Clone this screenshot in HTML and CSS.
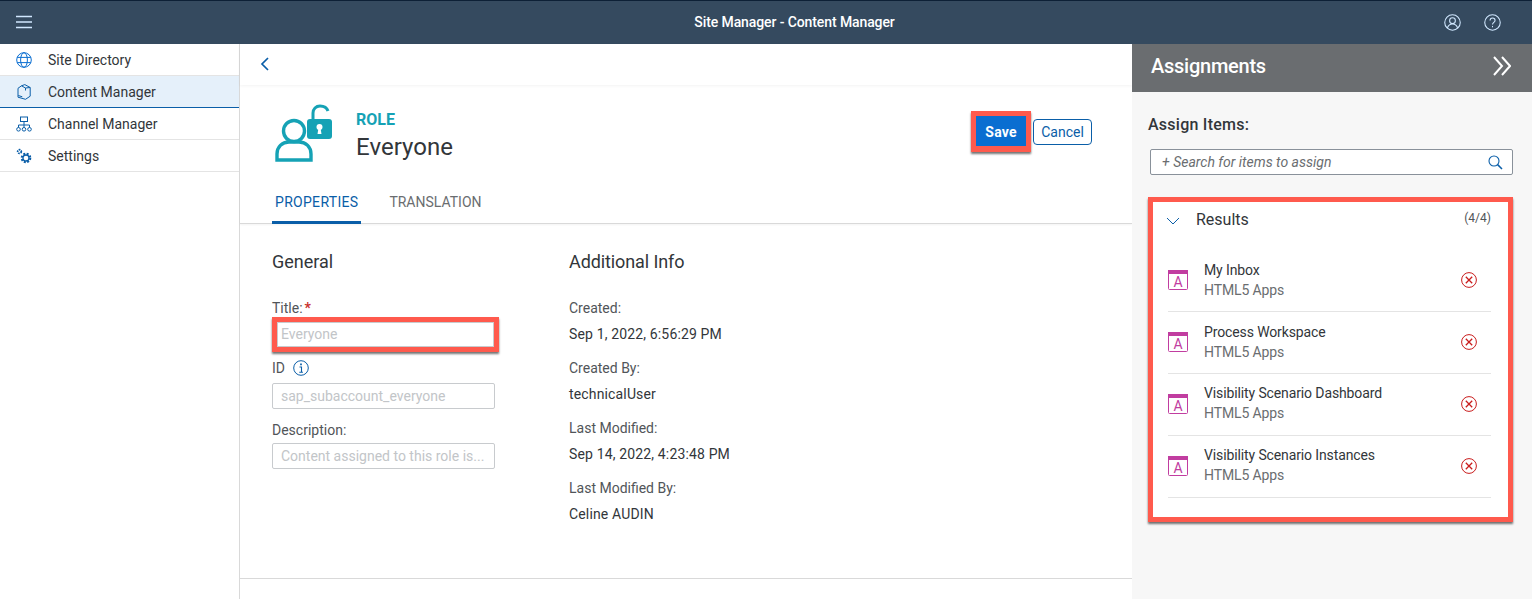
FILE: index.html
```html
<!DOCTYPE html>
<html lang="en">
<head>
    <meta charset="UTF-8">
    <title>Site Manager - Content Manager</title>
    <link rel="stylesheet" href="styles.css">
</head>
<body>
    <header class="shell">
        <svg class="shell-menu" width="16" height="14" viewBox="0 0 16 14"><path d="M0 1.500h16M0 7h16M0 12.500h16" stroke="#d1e8ff" stroke-width="1.400"/></svg>
        <div class="shell-title">Site Manager - Content Manager</div>
        <svg class="shell-icon" width="17" height="17" viewBox="0 0 16 16" fill="none" stroke="#d1e8ff" stroke-width="1"><circle cx="8" cy="8" r="7.300"/><circle cx="8" cy="6.300" r="2.700"/><path d="M3.200 13.400c.6-2.600 2.500-4 4.800-4s4.200 1.400 4.800 4"/></svg>
        <svg class="shell-icon" width="17" height="17" viewBox="0 0 16 16" fill="none" stroke="#d1e8ff" stroke-width="1"><circle cx="8" cy="8" r="7.300"/><path d="M5.700 6.200c0-1.400 1.100-2.400 2.400-2.400s2.300 1 2.300 2.200c0 1.900-2.400 1.900-2.400 3.900"/><path d="M8 11.200v1.300"/></svg>
    </header>
    <div class="layout">
        <nav class="sidebar">
            <div class="nav-item">
                <svg width="16" height="16" viewBox="0 0 16 16" fill="none" stroke="#0a6ed1" stroke-width="1"><circle cx="8" cy="8" r="7.300"/><ellipse cx="8" cy="8" rx="3.400" ry="7.300"/><path d="M1.200 5.400h13.600M1.200 10.600h13.600"/></svg>
                <span>Site Directory</span>
            </div>
            <div class="nav-item active">
                <svg width="16" height="16" viewBox="0 0 16 16" fill="none" stroke="#0a5ea8" stroke-width="1"><path d="M5.500 1.800L8.800.6l5.400 2.900v8.700L9.500 15.300 2 13.200V4.300zM5.500 1.800l4 2.200 4.700-.5M9.500 4v2.500M2.300 11.500l4 1.300"/></svg>
                <span>Content Manager</span>
            </div>
            <div class="nav-item">
                <svg width="16" height="16" viewBox="0 0 16 16" fill="none" stroke="#0a5ea8" stroke-width="1"><rect x="4.500" y="1" width="7" height="4.500"/><path d="M8 5.500v3.500M2.500 11.500V9h11v2.500M8 9v2.500"/><circle cx="2.500" cy="13.300" r="1.800"/><circle cx="8" cy="13.300" r="1.800"/><circle cx="13.500" cy="13.300" r="1.800"/></svg>
                <span>Channel Manager</span>
            </div>
            <div class="nav-item">
                <svg width="16" height="16" viewBox="0 0 16 16" fill="none" stroke="#0a5ea8"><circle cx="3.500" cy="3.500" r="1.800" stroke-dasharray="1.500 .8" stroke-width="1.800"/><circle cx="10" cy="10" r="3" stroke-width="1.300"/><circle cx="10" cy="10" r="4.300" stroke-dasharray="2 1.400" stroke-width="2"/></svg>
                <span>Settings</span>
            </div>
        </nav>

        <main class="content">
            <div class="back-bar">
                <svg width="9" height="14" viewBox="0 0 9 14" fill="none" stroke="#0a5ea8" stroke-width="1.700"><path d="M8 1L2 7l6 6"/></svg>
            </div>
            <div class="object-header">
                <svg class="role-icon" width="60" height="58" viewBox="0 0 60 58" fill="none">
                    <circle cx="19" cy="27" r="10.500" stroke="#15a2b5" stroke-width="3.400"/>
                    <path d="M2 56V50c0-7 5-12 12-12h10c7 0 12 5 12 12v6H2z" stroke="#15a2b5" stroke-width="3.400"/>
                    <path d="M38 16V9c0-4 3-7 7-7s7 2 8 5" stroke="#15a2b5" stroke-width="3"/>
                    <rect x="32" y="15" width="25" height="20" rx="3" fill="#15a2b5"/>
                    <circle cx="44.500" cy="23" r="3" fill="#fff"/>
                    <path d="M43.500 24h2l1 6h-4z" fill="#fff"/>
                </svg>
                <div class="object-titles">
                    <div class="object-type">ROLE</div>
                    <div class="object-name">Everyone</div>
                </div>
                <div class="object-actions">
                    <div class="mark mark-save"><button class="btn-save">Save</button></div>
                    <button class="btn-cancel">Cancel</button>
                </div>
            </div>
            <div class="tabs">
                <div class="tab selected">PROPERTIES</div>
                <div class="tab">TRANSLATION</div>
            </div>
            <div class="details">
                <section class="col-general">
                    <h2>General</h2>
                    <label class="title-label">Title:<span class="req">*</span></label>
                    <div class="mark mark-title"><div class="field field-plain">Everyone</div></div>
                    <label class="id-label">ID
                        <svg width="16" height="16" viewBox="0 0 16 16" fill="none" stroke="#0a5ea8"><circle cx="8" cy="8" r="7.300" stroke-width="1"/><path d="M6.500 7h2v5M6.300 12.300h3.600" stroke-width="1.100"/><path d="M8 3.500v1.800" stroke-width="1.700"/></svg>
                    </label>
                    <div class="field field-id">sap_subaccount_everyone</div>
                    <label class="desc-label">Description:</label>
                    <div class="field field-desc">Content assigned to this role is...</div>
                </section>
                <section class="col-info">
                    <h2>Additional Info</h2>
                    <div class="info-pair"><div>Created:</div><div>Sep 1, 2022, 6:56:29 PM</div></div>
                    <div class="info-pair"><div>Created By:</div><div>technicalUser</div></div>
                    <div class="info-pair"><div>Last Modified:</div><div>Sep 14, 2022, 4:23:48 PM</div></div>
                    <div class="info-pair"><div>Last Modified By:</div><div>Celine AUDIN</div></div>
                </section>
            </div>
        </main>

        <aside class="assign">
            <div class="assign-head">
                <span>Assignments</span>
                <svg width="18" height="20" viewBox="0 0 18 20" fill="none" stroke="#fff" stroke-width="2"><path d="M1 1l8 9-8 9M9 1l8 9-8 9"/></svg>
            </div>
            <div class="assign-body">
                <div class="assign-label">Assign Items:</div>
                <div class="search">
                    <span>+ Search for items to assign</span>
                    <svg width="15" height="15" viewBox="0 0 15 15" fill="none" stroke="#0a5ea8" stroke-width="1.100"><circle cx="6" cy="6" r="5"/><path d="M9.600 9.600L14 14" stroke-width="1.500"/></svg>
                </div>
                <div class="results">
                    <div class="results-head">
                        <svg width="14" height="8" viewBox="0 0 14 8" fill="none" stroke="#0a5ea8" stroke-width="1"><path d="M1 1l6 6 6-6"/></svg>
                        <span class="results-title">Results</span>
                        <span class="results-count">(4/4)</span>
                    </div>
                    <div class="result-row">
                        <svg class="app-icon" width="20" height="20" viewBox="0 0 20 20"><rect x=".5" y=".5" width="19" height="19" rx="1" fill="none" stroke="#c13da0"/><rect width="20" height="4" fill="#c13da0"/><text x="10" y="17" text-anchor="middle" class="app-letter">A</text></svg>
                        <div class="result-text"><div>My Inbox</div><div class="result-sub">HTML5 Apps</div></div>
                        <svg class="remove-icon" width="16" height="16" viewBox="0 0 16 16" fill="none" stroke="#c91c1c"><circle cx="8" cy="8" r="7.400"/><path d="M4.800 4.800l6.400 6.400M11.200 4.800l-6.400 6.400" stroke-width="1.300"/></svg>
                    </div>
                    <div class="result-row">
                        <svg class="app-icon" width="20" height="20" viewBox="0 0 20 20"><rect x=".5" y=".5" width="19" height="19" rx="1" fill="none" stroke="#c13da0"/><rect width="20" height="4" fill="#c13da0"/><text x="10" y="17" text-anchor="middle" class="app-letter">A</text></svg>
                        <div class="result-text"><div>Process Workspace</div><div class="result-sub">HTML5 Apps</div></div>
                        <svg class="remove-icon" width="16" height="16" viewBox="0 0 16 16" fill="none" stroke="#c91c1c"><circle cx="8" cy="8" r="7.400"/><path d="M4.800 4.800l6.400 6.400M11.200 4.800l-6.400 6.400" stroke-width="1.300"/></svg>
                    </div>
                    <div class="result-row row-tight">
                        <svg class="app-icon" width="20" height="20" viewBox="0 0 20 20"><rect x=".5" y=".5" width="19" height="19" rx="1" fill="none" stroke="#c13da0"/><rect width="20" height="4" fill="#c13da0"/><text x="10" y="17" text-anchor="middle" class="app-letter">A</text></svg>
                        <div class="result-text"><div>Visibility Scenario Dashboard</div><div class="result-sub">HTML5 Apps</div></div>
                        <svg class="remove-icon" width="16" height="16" viewBox="0 0 16 16" fill="none" stroke="#c91c1c"><circle cx="8" cy="8" r="7.400"/><path d="M4.800 4.800l6.400 6.400M11.200 4.800l-6.400 6.400" stroke-width="1.300"/></svg>
                    </div>
                    <div class="result-row row-tight">
                        <svg class="app-icon" width="20" height="20" viewBox="0 0 20 20"><rect x=".5" y=".5" width="19" height="19" rx="1" fill="none" stroke="#c13da0"/><rect width="20" height="4" fill="#c13da0"/><text x="10" y="17" text-anchor="middle" class="app-letter">A</text></svg>
                        <div class="result-text"><div>Visibility Scenario Instances</div><div class="result-sub">HTML5 Apps</div></div>
                        <svg class="remove-icon" width="16" height="16" viewBox="0 0 16 16" fill="none" stroke="#c91c1c"><circle cx="8" cy="8" r="7.400"/><path d="M4.800 4.800l6.400 6.400M11.200 4.800l-6.400 6.400" stroke-width="1.300"/></svg>
                    </div>
                </div>
            </div>
        </aside>
    </div>
</body>
</html>
```
FILE: styles.css
```css
* {
    margin: 0;
    padding: 0;
    box-sizing: border-box;
}

html, body {
    height: 599px;
    overflow: hidden;
}

body {
    font-family: Roboto, "Liberation Sans", sans-serif;
    font-size: 14px;
    color: #32363a;
    background-color: #fff;
}

svg {
    display: block;
    flex: none;
}

.shell {
    height: 44px;
    background-color: #354a5f;
    border-top: 1px solid #0d2036;
    display: flex;
    align-items: center;
    padding: 0 31px 1px 16px;
    color: #fff;
}

.shell-title {
    flex: 1;
    text-align: center;
    font-weight: 500;
    font-size: 14px;
    letter-spacing: -0.1px;
    padding-left: 136px;
}

.shell-icon {
    margin-left: 23px;
}

.layout {
    display: flex;
    height: 555px;
}

.sidebar {
    width: 240px;
    flex: none;
    border-right: 1px solid #d9d9d9;
}

.nav-item {
    height: 32px;
    display: flex;
    align-items: center;
    gap: 16px;
    padding-left: 16px;
    border-bottom: 1px solid #e4e4e4;
}

.nav-item.active {
    background-color: #e5f0fa;
    border-bottom-color: #0a5ea8;
}

.content {
    width: 892px;
    flex: none;
    height: 535px;
    border-bottom: 1px solid #d9d9d9;
}

.back-bar {
    height: 41px;
    padding: 13px 0 0 20px;
    box-shadow: 0 1px 3px rgba(0, 0, 0, 0.05);
}

.object-header {
    height: 95px;
    display: flex;
    padding: 19px 40px 0 35px;
}

.object-titles {
    margin-left: 21px;
    flex: 1;
}

.object-type {
    font-size: 16px;
    font-weight: 700;
    color: #15a2b5;
    line-height: 20px;
    margin-top: 6px;
}

.object-name {
    font-size: 24px;
    line-height: 32px;
    margin-top: 1px;
    letter-spacing: 0.05px;
}

.object-actions {
    display: flex;
    align-items: flex-start;
}

.mark {
    border: 5px solid #ff5a4d;
    box-shadow: 0 2px 2px rgba(0, 0, 0, 0.55);
}

.mark-save {
    margin: 7px 2px 0 0;
    width: 60px;
    height: 41px;
    background-color: #0a6ed1;
    border-width: 5px 5px 6px 5px;
}

.btn-save {
    width: 100%;
    height: 100%;
    border: none;
    padding-top: 2px;
    background-color: #0a6ed1;
    color: #fff;
    font: 700 14px Roboto, sans-serif;
    letter-spacing: 0.2px;
}

.btn-cancel {
    margin-top: 15px;
    width: 59px;
    height: 26px;
    border: 1px solid #0a5ea8;
    border-radius: 4px;
    background-color: #fff;
    color: #0a5ea8;
    font: 14px Roboto, sans-serif;
}

.tabs {
    height: 44px;
    display: flex;
    border-bottom: 1px solid #d9d9d9;
    padding-left: 32px;
    box-shadow: 0 1px 2px rgba(0, 0, 0, 0.05);
}

.tab {
    height: 44px;
    padding: 13px 3px 0;
    margin-right: 25px;
    color: #6a6d70;
    line-height: 18px;
}

.tab.selected {
    color: #0a5ea8;
    border-bottom: 3px solid #0a5ea8;
    letter-spacing: 0.3px;
}

.details {
    display: flex;
    padding: 27px 0 0 32px;
}

h2 {
    font-size: 18px;
    font-weight: 400;
    line-height: 22px;
}

.col-general {
    width: 297px;
}

.col-general label {
    display: flex;
    align-items: center;
    gap: 8px;
    color: #515559;
    line-height: 16px;
}

.title-label {
    margin-top: 27px;
}

.title-label.title-label {
    gap: 2px;
}

.req {
    color: #c9302c;
    font-weight: 700;
}

.id-label {
    margin-top: 8px;
}

.desc-label {
    margin-top: 13px;
}

.field {
    width: 223px;
    height: 26px;
    border: 1px solid #c8cbce;
    border-radius: 2px;
    padding: 0 8px;
    line-height: 24px;
    color: #c2c5c8;
    background-color: #fff;
    white-space: nowrap;
}

.field-id {
    margin-top: 7px;
}

.field-desc {
    margin-top: 5px;
}

.field-plain {
    width: 100%;
    height: 100%;
    padding: 0 3px;
    border-radius: 0;
    line-height: 22px;
}

.mark-title {
    width: 227px;
    height: 35px;
    margin-top: 1px;
}

.col-info {
    width: 400px;
}

.col-info h2 {
    margin-bottom: 25px;
    letter-spacing: -0.1px;
}

.info-pair {
    height: 60px;
    line-height: 20px;
}

.info-pair div:first-child {
    color: #515559;
    margin-bottom: 6px;
}

.info-pair div:last-child {
    letter-spacing: 0.15px;
}

.assign {
    width: 400px;
    flex: none;
    background-color: #f7f7f7;
}

.assign-head {
    height: 48px;
    background-color: #6a6d70;
    color: #fff;
    display: flex;
    align-items: center;
    justify-content: space-between;
    padding: 0 21px 4px 19px;
    font-size: 20px;
    font-weight: 500;
    letter-spacing: -0.25px;
}

.assign-body {
    padding: 24px 19px 0 16px;
}

.assign-label {
    font-size: 16px;
    font-weight: 500;
    line-height: 18px;
    letter-spacing: 0.25px;
}

.search {
    margin: 15px 0 0 2px;
    height: 26px;
    width: 363px;
    background-color: #fff;
    border: 1px solid #89919a;
    border-radius: 2px;
    display: flex;
    align-items: center;
    justify-content: space-between;
    padding: 0 9px 0 11px;
    font-style: italic;
    color: #6a6d70;
}

.results {
    margin-top: 22px;
    width: 365px;
    height: 325px;
    background-color: #fff;
    border: 5px solid #ff5a4d;
    box-shadow: 0 2px 2px rgba(0, 0, 0, 0.55);
    padding: 0 17px 0 13px;
}

.results-head {
    height: 48px;
    display: flex;
    align-items: flex-start;
    padding-top: 8px;
}

.results-head svg {
    margin-top: 7px;
}

.results-title {
    margin-left: 16px;
    font-size: 16px;
    line-height: 20px;
}

.results-count {
    margin-left: auto;
    font-size: 12px;
    color: #515559;
    line-height: 14px;
    margin-top: 1px;
}

.result-row {
    height: 62px;
    display: flex;
    align-items: center;
    margin-left: 2px;
    padding-bottom: 2px;
    border-bottom: 1px solid #e4e4e4;
}

.row-tight {
    padding-bottom: 4px;
}

.result-text {
    margin-left: 16px;
    flex: 1;
    line-height: 20px;
    letter-spacing: -0.12px;
}

.result-sub {
    color: #6a6d70;
}

.row-tight .app-icon,
.row-tight .remove-icon {
    margin-top: 2px;
}

.app-letter {
    font-size: 14px;
    fill: #c13da0;
}

.remove-icon {
    margin-right: 14px;
}
```
